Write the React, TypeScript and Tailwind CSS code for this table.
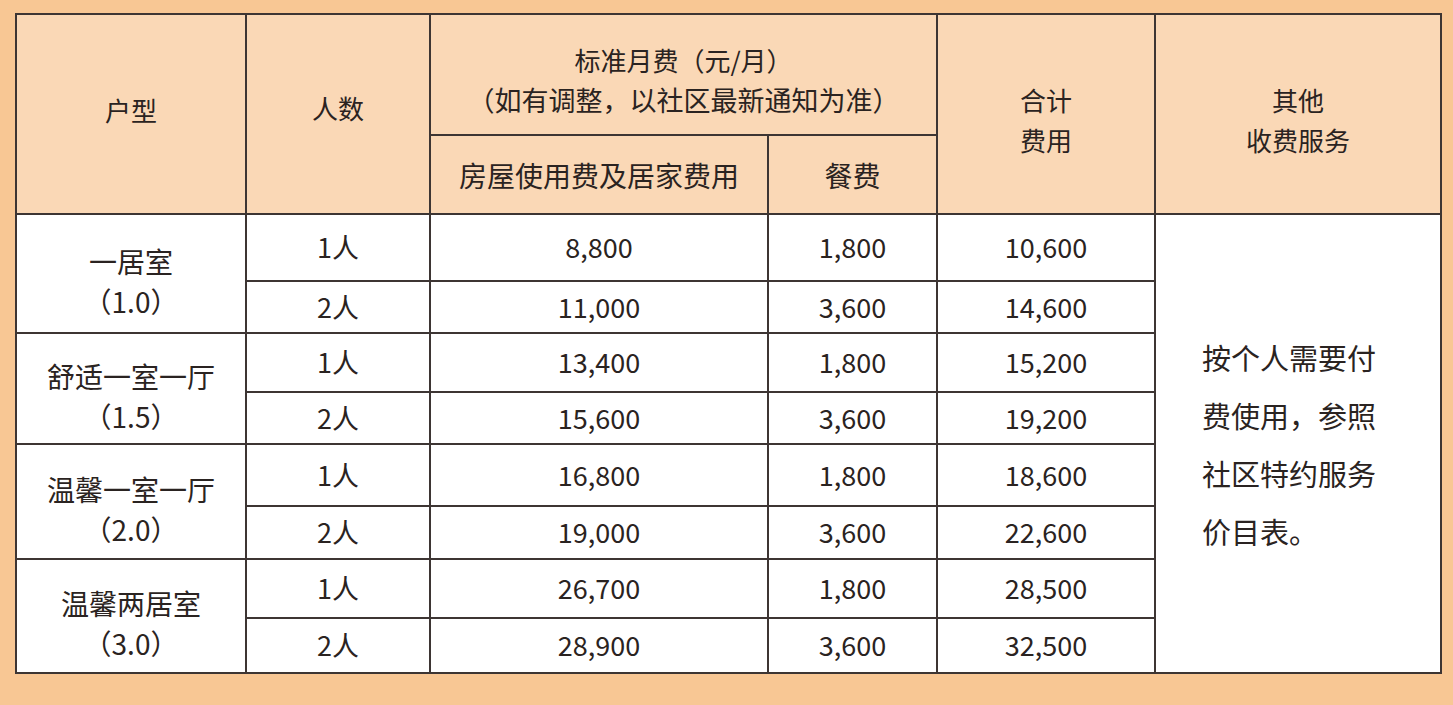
const rows = [
  { type: "一居室", code: "（1.0）", items: [["1人", "8,800", "1,800", "10,600"], ["2人", "11,000", "3,600", "14,600"]], h: [67, 52] },
  { type: "舒适一室一厅", code: "（1.5）", items: [["1人", "13,400", "1,800", "15,200"], ["2人", "15,600", "3,600", "19,200"]], h: [59, 52] },
  { type: "温馨一室一厅", code: "（2.0）", items: [["1人", "16,800", "1,800", "18,600"], ["2人", "19,000", "3,600", "22,600"]], h: [62, 53] },
  { type: "温馨两居室", code: "（3.0）", items: [["1人", "26,700", "1,800", "28,500"], ["2人", "28,900", "3,600", "32,500"]], h: [59, 55] },
];

const cell = "border-2 border-[#3d3533] text-center align-middle p-0";

export default function App() {
  return (
    <div
      className="w-[1453px] h-[705px] bg-[#f8c794] pl-[15px] pt-[13px] text-[#2a2321]"
      style={{ fontFamily: '"Noto Sans CJK SC", "Noto Sans", sans-serif' }}
    >
      <table className="w-[1425px] table-fixed border-collapse border-2 border-[#3d3533] bg-white">
        <colgroup>
          <col className="w-[230px]" />
          <col className="w-[184px]" />
          <col className="w-[338px]" />
          <col className="w-[169px]" />
          <col className="w-[218px]" />
          <col className="w-[286px]" />
        </colgroup>
        <thead className="bg-[#fad8b6] text-[26px]">
          <tr className="h-[121px]">
            <th rowSpan={2} className={`${cell} font-normal`}>
              <span className="relative -top-[5px]">户型</span>
            </th>
            <th rowSpan={2} className={`${cell} font-normal`}>
              <span className="relative -top-[7px]">人数</span>
            </th>
            <th colSpan={2} className={`${cell} font-normal leading-[40px] pt-[10px]`}>
              <div>标准月费（元/月）</div>
              <div className="text-[27px]">（如有调整，以社区最新通知为准）</div>
            </th>
            <th rowSpan={2} className={`${cell} font-normal leading-[40px] pt-[12px]`}>
              <div>合计</div>
              <div>费用</div>
            </th>
            <th rowSpan={2} className={`${cell} font-normal leading-[40px] pt-[12px]`}>
              <div>其他</div>
              <div>收费服务</div>
            </th>
          </tr>
          <tr className="h-[79px]">
            <th className={`${cell} font-normal text-[28px]`}>房屋使用费及居家费用</th>
            <th className={`${cell} font-normal text-[28px]`}>餐费</th>
          </tr>
        </thead>
        <tbody className="text-[27px]">
          {rows.map((g, gi) =>
            g.items.map((r, ri) => (
              <tr key={`${gi}-${ri}`} style={{ height: g.h[ri] }}>
                {ri === 0 && (
                  <td rowSpan={2} className={`${cell} text-[28px] leading-[40px] pt-[14px]`}>
                    <div>{g.type}</div>
                    <div>{g.code}</div>
                  </td>
                )}
                {r.map((v, vi) => (
                  <td key={vi} className={cell}>
                    {v}
                  </td>
                ))}
                {gi === 0 && ri === 0 && (
                  <td rowSpan={8} className={`${cell} text-left pl-[46px] text-[29px] leading-[58px]`}>
                    <div>按个人需要付</div>
                    <div>费使用，参照</div>
                    <div>社区特约服务</div>
                    <div>价目表。</div>
                  </td>
                )}
              </tr>
            ))
          )}
        </tbody>
      </table>
    </div>
  );
}
